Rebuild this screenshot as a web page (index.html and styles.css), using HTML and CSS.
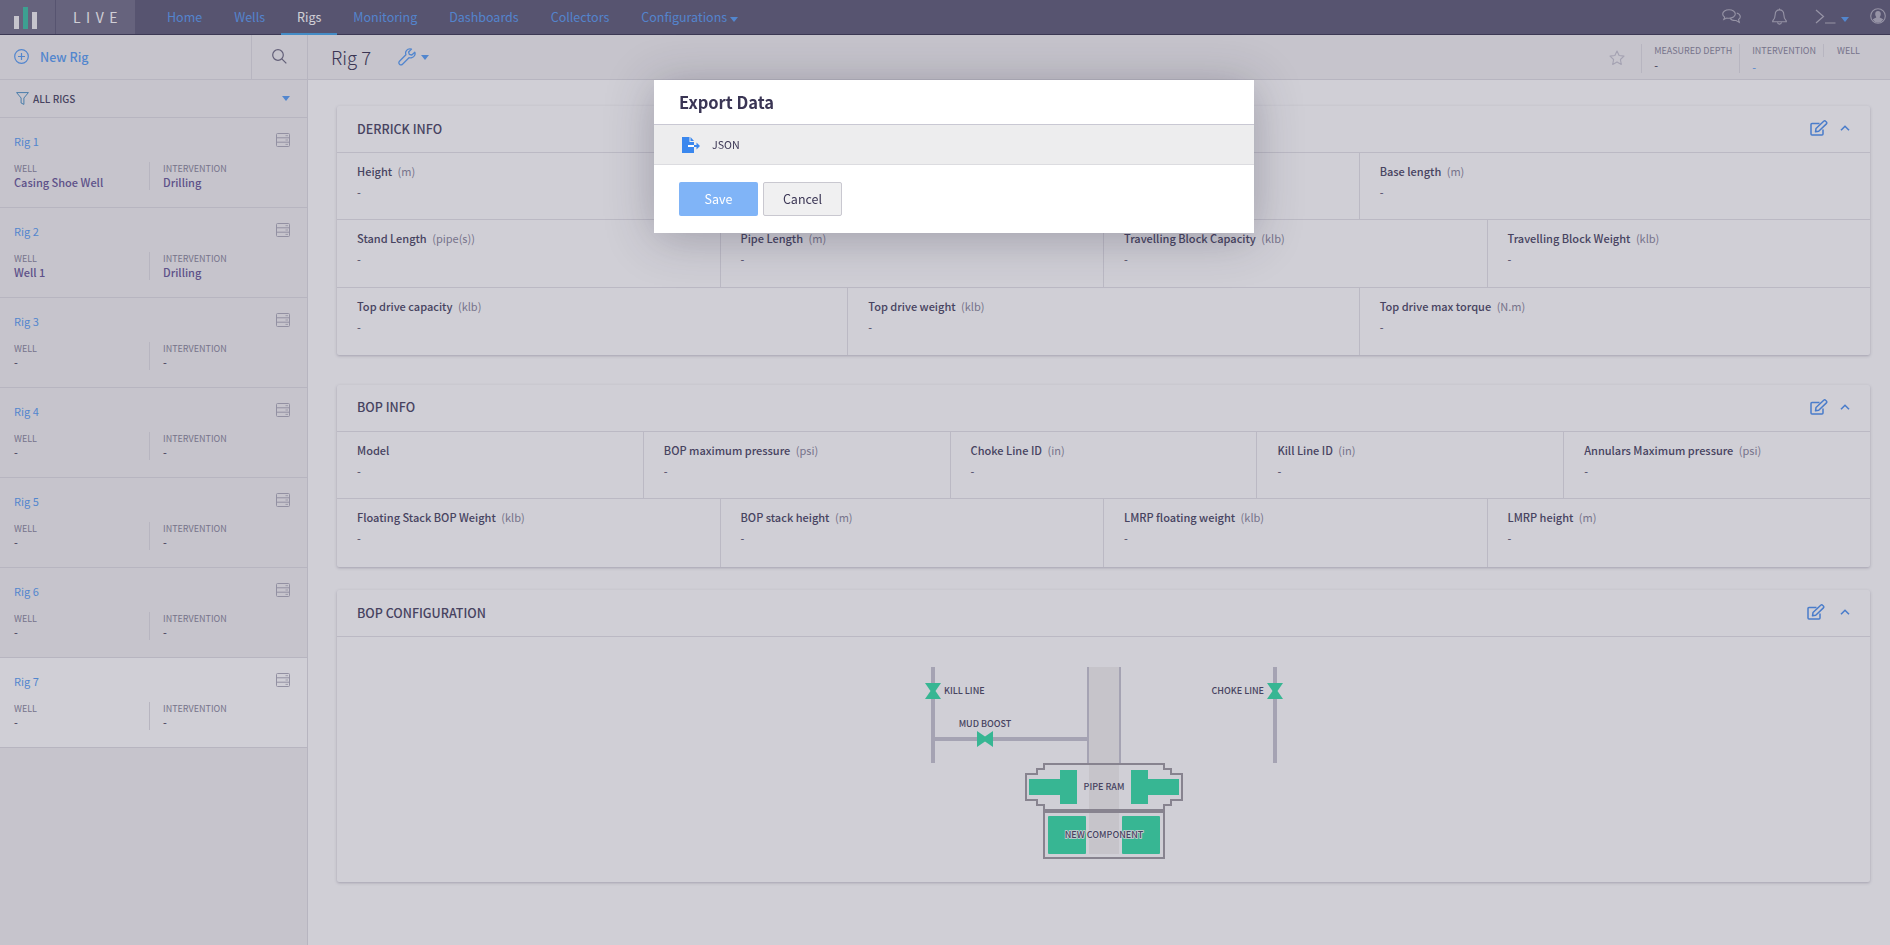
FILE: index.html
```html
<!DOCTYPE html>
<html lang="en">
<head>
    <meta charset="UTF-8">
    <title>Rig 7 - Live</title>
    <link rel="stylesheet" href="styles.css">
</head>
<body>

<svg class="icon-defs" width="0" height="0">
    <symbol id="i-server" viewBox="0 0 14 14">
        <rect x="0.5" y="0.5" width="13" height="13" rx="1" fill="none" stroke="currentColor"/>
        <path d="M1 4.8H13M1 9.2H13" stroke="currentColor" fill="none"/>
        <path d="M9.5 2.7H12M9.5 7H12M9.5 11.4H12" stroke="currentColor" stroke-width="0.8" fill="none"/>
    </symbol>
    <symbol id="i-edit" viewBox="0 0 18 16">
        <path d="M13 9.5V14a1 1 0 0 1-1 1H2a1 1 0 0 1-1-1V4.500a1 1 0 0 1 1-1h7.500" fill="none" stroke="currentColor" stroke-width="1.500"/>
        <path d="M6 8.500L13.700 1.200a1.300 1.300 0 0 1 1.900 0l.8.8a1.300 1.300 0 0 1 0 1.900L8.700 11.200 5.500 11.800z" fill="none" stroke="currentColor" stroke-width="1.500" stroke-linejoin="round"/>
    </symbol>
    <symbol id="i-up" viewBox="0 0 10 6">
        <path d="M1 5.200L5 1.300 9 5.200" fill="none" stroke="currentColor" stroke-width="1.600"/>
    </symbol>
</svg>

<header class="topbar">
    <div class="logo-mark">
        <span class="bar bar-1"></span>
        <span class="bar bar-2"></span>
        <span class="bar bar-3"></span>
    </div>
    <div class="logo-name">LIVE</div>
    <nav class="nav">
        <a class="nav-item">Home</a>
        <a class="nav-item">Wells</a>
        <a class="nav-item active">Rigs</a>
        <a class="nav-item">Monitoring</a>
        <a class="nav-item">Dashboards</a>
        <a class="nav-item">Collectors</a>
        <a class="nav-item">Configurations <span class="caret"></span></a>
    </nav>
    <div class="top-icons">
        <svg class="ti-chat" width="19" height="15" viewBox="0 0 19 15" fill="none" stroke="currentColor" stroke-width="1.100">
            <path d="M7 .8C3.500.8.700 2.700.700 5c0 1.200.8 2.300 2 3.100L1.800 10.500 4.800 9c.7.2 1.400.2 2.200.2 3.500 0 6.300-1.900 6.300-4.200S10.500.8 7 .8z"/>
            <path d="M14.800 4c2 .7 3.500 2 3.500 3.700 0 1.100-.7 2.100-1.800 2.800l.8 2.900-3.200-1.900c-2.500.2-5-.6-6-2.300"/>
        </svg>
        <svg class="ti-bell" width="15" height="17" viewBox="0 0 15 17" fill="none" stroke="currentColor" stroke-width="1.100">
            <path d="M7.500 1.900c-2.600 0-4.300 2-4.300 4.500 0 3.500-.9 5-2.500 6.600v.7h13.600V13c-1.600-1.600-2.500-3.100-2.500-6.600 0-2.500-1.700-4.500-4.300-4.500z"/>
            <path d="M7.500 .5v1.400M5.600 14.200a1.900 1.900 0 0 0 3.800 0"/>
        </svg>
        <svg class="ti-term" width="21" height="15" viewBox="0 0 21 15" fill="none" stroke="currentColor" stroke-width="1.200">
            <path d="M1 1l7.500 6.500L1 14M10 14h10.500"/>
        </svg>
        <span class="caret ti-caret"></span>
        <svg class="ti-user" width="16" height="16" viewBox="0 0 16 16">
            <circle cx="8" cy="8" r="7.300" fill="none" stroke="currentColor" stroke-width="1.100"/>
            <path d="M8 3c1.800 0 2.800 1.300 2.800 3S9.900 8.600 9.700 9.400c1.600.7 3 1.100 3.600 2.100A6.600 6.600 0 0 1 8 14.700a6.600 6.600 0 0 1-5.300-3.200c.6-1 2-1.400 3.600-2.100C6.100 8.600 5.200 7.700 5.200 6S6.200 3 8 3z" fill="currentColor"/>
        </svg>
    </div>
</header>

<div class="layout">
    <aside class="sidebar">
        <div class="side-head">
            <div class="new-rig">
                <svg width="15" height="15" viewBox="0 0 15 15" fill="none" stroke="currentColor" stroke-width="1.200">
                    <circle cx="7.500" cy="7.500" r="6.800"/>
                    <path d="M7.500 4v7M4 7.500h7"/>
                </svg>
                <span>New Rig</span>
            </div>
            <div class="side-search">
                <svg width="15" height="15" viewBox="0 0 15 15" fill="none" stroke="currentColor" stroke-width="1.200">
                    <circle cx="6" cy="6" r="5.300"/>
                    <path d="M9.800 9.800L14.300 14.300"/>
                </svg>
            </div>
        </div>
        <div class="side-filter">
            <svg class="filter-icon" width="13" height="13" viewBox="0 0 13 13" fill="none" stroke="currentColor" stroke-width="1">
                <path d="M.6 .6h11.800L7.900 6v6.400L5.100 11V6z" stroke-linejoin="round"/>
            </svg>
            <span class="filter-name">ALL RIGS</span>
            <span class="caret"></span>
        </div>

        <div class="rig">
            <div class="rig-top"><a class="rig-name">Rig 1</a><svg class="rig-icon" width="14" height="14"><use href="#i-server"/></svg></div>
            <div class="rig-info">
                <div class="rig-col rig-well"><div class="rig-label">WELL</div><div class="rig-value">Casing Shoe Well</div></div>
                <div class="rig-col"><div class="rig-label">INTERVENTION</div><div class="rig-value">Drilling</div></div>
            </div>
        </div>
        <div class="rig">
            <div class="rig-top"><a class="rig-name">Rig 2</a><svg class="rig-icon" width="14" height="14"><use href="#i-server"/></svg></div>
            <div class="rig-info">
                <div class="rig-col rig-well"><div class="rig-label">WELL</div><div class="rig-value">Well 1</div></div>
                <div class="rig-col"><div class="rig-label">INTERVENTION</div><div class="rig-value">Drilling</div></div>
            </div>
        </div>
        <div class="rig">
            <div class="rig-top"><a class="rig-name">Rig 3</a><svg class="rig-icon" width="14" height="14"><use href="#i-server"/></svg></div>
            <div class="rig-info">
                <div class="rig-col rig-well"><div class="rig-label">WELL</div><div class="rig-value empty">-</div></div>
                <div class="rig-col"><div class="rig-label">INTERVENTION</div><div class="rig-value empty">-</div></div>
            </div>
        </div>
        <div class="rig">
            <div class="rig-top"><a class="rig-name">Rig 4</a><svg class="rig-icon" width="14" height="14"><use href="#i-server"/></svg></div>
            <div class="rig-info">
                <div class="rig-col rig-well"><div class="rig-label">WELL</div><div class="rig-value empty">-</div></div>
                <div class="rig-col"><div class="rig-label">INTERVENTION</div><div class="rig-value empty">-</div></div>
            </div>
        </div>
        <div class="rig">
            <div class="rig-top"><a class="rig-name">Rig 5</a><svg class="rig-icon" width="14" height="14"><use href="#i-server"/></svg></div>
            <div class="rig-info">
                <div class="rig-col rig-well"><div class="rig-label">WELL</div><div class="rig-value empty">-</div></div>
                <div class="rig-col"><div class="rig-label">INTERVENTION</div><div class="rig-value empty">-</div></div>
            </div>
        </div>
        <div class="rig">
            <div class="rig-top"><a class="rig-name">Rig 6</a><svg class="rig-icon" width="14" height="14"><use href="#i-server"/></svg></div>
            <div class="rig-info">
                <div class="rig-col rig-well"><div class="rig-label">WELL</div><div class="rig-value empty">-</div></div>
                <div class="rig-col"><div class="rig-label">INTERVENTION</div><div class="rig-value empty">-</div></div>
            </div>
        </div>
        <div class="rig selected">
            <div class="rig-top"><a class="rig-name">Rig 7</a><svg class="rig-icon" width="14" height="14"><use href="#i-server"/></svg></div>
            <div class="rig-info">
                <div class="rig-col rig-well"><div class="rig-label">WELL</div><div class="rig-value empty">-</div></div>
                <div class="rig-col"><div class="rig-label">INTERVENTION</div><div class="rig-value empty">-</div></div>
            </div>
        </div>
    </aside>

    <main class="main">
        <div class="main-head">
            <h1 class="rig-title">Rig 7</h1>
            <svg class="wrench" width="18" height="18" viewBox="0 0 18 18" fill="none" stroke="currentColor" stroke-width="1.300">
                <path d="M16.800 4.200l-3 2.800-2.500-.6-.7-2.400L13.500 1.100C11 .2 8.500 1.500 7.800 3.800c-.3 1-.2 2 .1 2.900L1.500 13.200c-.9.900-.9 2.200 0 3s2.100.9 3 0l6.500-6.500c.9.300 1.900.3 2.800 0 2.500-.8 3.900-3.200 3-5.500z" stroke-linejoin="round"/>
            </svg>
            <span class="caret"></span>
            <div class="head-right">
                <svg class="star" width="16" height="15" viewBox="0 0 16 15" fill="none" stroke="currentColor" stroke-width="1.100">
                    <path d="M8 1l2.100 4.500 4.900.6-3.600 3.400.9 4.900L8 11.900l-4.300 2.500.9-4.900L1 6.100l4.900-.6z" stroke-linejoin="round"/>
                </svg>
                <div class="stat"><div class="stat-label">MEASURED DEPTH</div><div class="stat-value">-</div></div>
                <div class="stat"><div class="stat-label">INTERVENTION</div><div class="stat-value blue">-</div></div>
                <div class="stat short"><div class="stat-label">WELL</div></div>
            </div>
        </div>

        <div class="content">
            <section class="card">
                <div class="card-head">
                    <h2 class="card-title">DERRICK INFO</h2>
                    <svg class="edit" width="18" height="16"><use href="#i-edit"/></svg>
                    <svg class="chev" width="10" height="6"><use href="#i-up"/></svg>
                </div>
                <div class="row">
                    <div class="cell"><div class="label">Height <i>(m)</i></div><div class="value">-</div></div>
                    <div class="cell"><div class="label">Base width <i>(m)</i></div><div class="value">-</div></div>
                    <div class="cell"><div class="label">Base length <i>(m)</i></div><div class="value">-</div></div>
                </div>
                <div class="row">
                    <div class="cell"><div class="label">Stand Length <i>(pipe(s))</i></div><div class="value">-</div></div>
                    <div class="cell"><div class="label">Pipe Length <i>(m)</i></div><div class="value">-</div></div>
                    <div class="cell"><div class="label">Travelling Block Capacity <i>(klb)</i></div><div class="value">-</div></div>
                    <div class="cell"><div class="label">Travelling Block Weight <i>(klb)</i></div><div class="value">-</div></div>
                </div>
                <div class="row">
                    <div class="cell"><div class="label">Top drive capacity <i>(klb)</i></div><div class="value">-</div></div>
                    <div class="cell"><div class="label">Top drive weight <i>(klb)</i></div><div class="value">-</div></div>
                    <div class="cell"><div class="label">Top drive max torque <i>(N.m)</i></div><div class="value">-</div></div>
                </div>
            </section>

            <section class="card card-bop">
                <div class="card-head">
                    <h2 class="card-title">BOP INFO</h2>
                    <svg class="edit" width="18" height="16"><use href="#i-edit"/></svg>
                    <svg class="chev" width="10" height="6"><use href="#i-up"/></svg>
                </div>
                <div class="row">
                    <div class="cell"><div class="label">Model</div><div class="value">-</div></div>
                    <div class="cell"><div class="label">BOP maximum pressure <i>(psi)</i></div><div class="value">-</div></div>
                    <div class="cell"><div class="label">Choke Line ID <i>(in)</i></div><div class="value">-</div></div>
                    <div class="cell"><div class="label">Kill Line ID <i>(in)</i></div><div class="value">-</div></div>
                    <div class="cell"><div class="label">Annulars Maximum pressure <i>(psi)</i></div><div class="value">-</div></div>
                </div>
                <div class="row">
                    <div class="cell"><div class="label">Floating Stack BOP Weight <i>(klb)</i></div><div class="value">-</div></div>
                    <div class="cell"><div class="label">BOP stack height <i>(m)</i></div><div class="value">-</div></div>
                    <div class="cell"><div class="label">LMRP floating weight <i>(klb)</i></div><div class="value">-</div></div>
                    <div class="cell"><div class="label">LMRP height <i>(m)</i></div><div class="value">-</div></div>
                </div>
            </section>

            <section class="card card-config">
                <div class="card-head">
                    <h2 class="card-title">BOP CONFIGURATION</h2>
                    <svg class="edit edit-wide" width="18" height="16"><use href="#i-edit"/></svg>
                    <svg class="chev" width="10" height="6"><use href="#i-up"/></svg>
                </div>
                <div class="config-body">
                    <!-- 0,0 of the drawing = page 904,667 -->
                    <svg class="bop" width="400" height="195" viewBox="0 0 400 195">
                        <rect class="line" x="27" y="0" width="4" height="96"/>
                        <rect class="line" x="369" y="0" width="4" height="96"/>
                        <rect class="line" x="31" y="70" width="152" height="4"/>
                        <rect class="bore" x="185" y="0" width="30" height="187"/>
                        <rect class="line" x="183" y="0" width="2" height="96"/>
                        <rect class="line" x="215" y="0" width="2" height="96"/>

                        <path class="valve" d="M21 16H37L31.500 24 37 32H21L26.500 24z"/>
                        <path class="valve" d="M363 16H379L373.500 24 379 32H363L368.500 24z"/>
                        <path class="valve" d="M73 64V80L81 74.500 89 80V64L81 69.500z"/>

                        <path class="shell" d="M140 97H260V102H267V107H278V133H267V138H260V143H140V138H133V133H122V107H133V102H140z"/>
                        <path class="ram" d="M125 112H156V103H173V137H156V128H125z"/>
                        <path class="ram" d="M275 112H244V103H227V137H244V128H275z"/>

                        <rect class="shell" x="140" y="143" width="120" height="48"/>
                        <rect class="shell-top" x="140" y="142" width="120" height="4"/>
                        <rect class="ram" x="144" y="149" width="38" height="38" rx="1"/>
                        <rect class="ram" x="218" y="149" width="38" height="38" rx="1"/>

                        <text class="bop-text" x="40" y="27">KILL LINE</text>
                        <text class="bop-text" x="360" y="27" text-anchor="end">CHOKE LINE</text>
                        <text class="bop-text" x="81" y="60" text-anchor="middle">MUD BOOST</text>
                        <text class="bop-text" x="200" y="123" text-anchor="middle">PIPE RAM</text>
                        <text class="bop-text halo" x="200" y="171" text-anchor="middle">NEW COMPONENT</text>
                    </svg>
                </div>
            </section>
        </div>
    </main>
</div>

<div class="overlay"></div>

<div class="modal">
    <h3 class="modal-title">Export Data</h3>
    <div class="modal-row">
        <svg width="18" height="16" viewBox="0 0 18 16">
            <path d="M0 0H7.500V5H12V16H0z" fill="#3a87ee"/>
            <path d="M8.500 0L12 4H8.500z" fill="#3a87ee"/>
            <path d="M6 8H12V10H6z" fill="#fff"/>
            <path d="M12 8H15V10H12z" fill="#3a87ee"/>
            <path d="M14.500 5.500L18 9 14.500 12.500z" fill="#3a87ee"/>
        </svg>
        <span>JSON</span>
    </div>
    <div class="modal-foot">
        <button class="btn btn-save">Save</button>
        <button class="btn btn-cancel">Cancel</button>
    </div>
</div>

</body>
</html>
```

FILE: styles.css
```css
* {
    box-sizing: border-box;
}

html, body {
    margin: 0;
    height: 100%;
    overflow: hidden;
}

body {
    background: #fff;
    color: #3a3554;
    font-family: "Noto Sans CJK SC", "Noto Sans", sans-serif;
    font-size: 12px;
}

.icon-defs {
    position: absolute;
}

.caret {
    display: inline-block;
    width: 0;
    height: 0;
    border-left: 4px solid transparent;
    border-right: 4px solid transparent;
    border-top: 5px solid #5aa0f5;
}

/* top bar */
.topbar {
    display: flex;
    height: 35px;
    background: #615e79;
    border-bottom: 1px solid #3d3a55;
}

.logo-mark {
    display: flex;
    align-items: flex-end;
    gap: 4px;
    width: 56px;
    padding: 0 0 5px 14px;
    background: #74718a;
    border-right: 1px solid #615e79;
}

.bar {
    width: 5px;
    background: #f2f1f4;
}

.bar-1 { height: 13px; }
.bar-2 { height: 22px; background: #3fc1a5; }
.bar-3 { height: 17px; }

.logo-name {
    width: 79px;
    padding-left: 17px;
    background: #74718a;
    color: #fff;
    font-size: 14px;
    font-weight: 400;
    line-height: 34px;
    letter-spacing: 5.500px;
}

.nav {
    display: flex;
    padding-left: 16px;
}

.nav-item {
    padding: 0 16px;
    color: #5b9df2;
    font-size: 12.500px;
    line-height: 34px;
}

.nav-item.active {
    color: #fff;
    border-bottom: 2px solid #47a8ea;
    height: 35px;
}

.top-icons {
    position: relative;
    flex: 1;
    color: #b3b1c0;
}

.top-icons svg, .ti-caret {
    position: absolute;
}

.ti-chat { right: 149px; top: 9px; }
.ti-bell { right: 103px; top: 8px; }
.ti-term { right: 54px; top: 9px; }
.ti-caret { right: 41px; top: 17px; }
.ti-user { right: 4px; top: 8px; }

/* columns */
.layout {
    display: flex;
    height: 910px;
}

.sidebar {
    width: 308px;
    background: #f2f1f2;
    border-right: 1px solid #dedde2;
}

.side-head {
    display: flex;
    height: 45px;
    border-bottom: 1px solid #dedde2;
}

.new-rig {
    display: flex;
    align-items: center;
    gap: 11px;
    width: 252px;
    padding: 0 0 1px 14px;
    border-right: 1px solid #dedde2;
    color: #5a9ff5;
    font-size: 12.500px;
    font-weight: 500;
}

.side-search {
    flex: 1;
    padding: 14px 0 0 20px;
    color: #6f6c84;
}

.side-filter {
    display: flex;
    align-items: center;
    height: 38px;
    padding: 0 17px 0 16px;
    border-bottom: 1px solid #dedde2;
    color: #4b4765;
}

.filter-icon {
    color: #4f93c5;
}

.filter-name {
    flex: 1;
    margin-left: 4px;
    font-size: 10px;
    font-weight: 500;
}

.rig {
    height: 90px;
    padding: 14px 14px 0;
    border-bottom: 1px solid #dedde2;
}

.rig.selected {
    background: #fff;
}

.rig-top {
    display: flex;
    justify-content: space-between;
    height: 27px;
}

.rig-name {
    color: #5a9ff5;
    font-size: 11px;
    line-height: 18px;
}

.rig-icon {
    margin: 1px 3px 0 0;
    color: #aeacbb;
}

.rig-info {
    display: flex;
    margin-top: 3px;
}

.rig-col {
    height: 28px;
}

.rig-well {
    width: 136px;
    border-right: 1px solid #dedde2;
    margin-right: 13px;
}

.rig-label {
    color: #8a879c;
    font-size: 9px;
    line-height: 13px;
}

.rig-value {
    color: #6a5a9a;
    font-size: 11px;
    font-weight: 500;
    line-height: 15px;
}

.rig-value.empty {
    color: #3a3554;
    font-weight: 400;
}

/* rig page */
.main {
    flex: 1;
    min-width: 0;
}

.main-head {
    display: flex;
    align-items: center;
    height: 45px;
    padding-left: 23px;
    background: #f2f1f2;
    border-bottom: 1px solid #dedde2;
}

.rig-title {
    margin: 0 27px 0 0;
    font-size: 18.500px;
    font-weight: 300;
    line-height: 44px;
}

.wrench {
    margin-right: 5px;
    color: #5a9ff5;
}

.head-right {
    display: flex;
    align-items: flex-start;
    margin-left: auto;
    padding-top: 8px;
    height: 43px;
}

.star {
    margin: 6px 16px 0 0;
    color: #c6c4d0;
}

.stat {
    height: 29px;
    padding: 0 7px 0 12px;
    border-left: 1px solid #dedde2;
}

.stat.short {
    height: 13px;
    padding: 0 30px 0 13px;
}

.stat-label {
    color: #8a879c;
    font-size: 9px;
    line-height: 13px;
}

.stat-value {
    margin-top: 1px;
    color: #3a3554;
    font-size: 11px;
    line-height: 14px;
}

.stat-value.blue {
    margin-top: 3px;
    color: #5a9ff5;
}

.content {
    padding: 26px 20px 0 29px;
}

.card {
    background: #fff;
    border-radius: 2px;
    box-shadow: 0 1px 3px rgba(58, 53, 84, 0.3);
    margin-bottom: 30px;
}

.card-bop {
    margin-bottom: 23.500px;
}

.card-head {
    display: flex;
    align-items: center;
    height: 47px;
    padding: 0 20px 2px;
    border-bottom: 1px solid #e4e3e8;
}

.card-title {
    flex: 1;
    margin: 0;
    color: #4b4765;
    font-size: 12.500px;
    font-weight: 500;
}

.edit {
    color: #4f93f0;
}

.edit-wide {
    margin-right: 3px;
}

.chev {
    margin-left: 12px;
    color: #4f93f0;
}

.row {
    display: flex;
    height: 67.330px;
    border-bottom: 1px solid #e4e3e8;
}

.row:last-child {
    border-bottom: none;
}

.cell {
    flex: 1 1 0;
    min-width: 0;
    padding: 10px 20px 0;
    border-right: 1px solid #e4e3e8;
}

.cell:last-child {
    border-right: none;
}

.label {
    color: #4b4765;
    font-size: 11px;
    font-weight: 500;
    line-height: 16px;
}

.label i {
    margin-left: 3px;
    color: #8a879c;
    font-style: normal;
    font-weight: 400;
}

.value {
    margin-top: 5px;
    color: #4b4765;
    font-size: 11px;
    line-height: 16px;
}

.config-body {
    display: flex;
    justify-content: center;
    height: 245px;
    padding-top: 30px;
}

.bop {
    overflow: visible;
}

.line { fill: #c7c6d2; }
.bore { fill: #f2f1f0; }
.valve, .ram { fill: #37dea7; }

.shell {
    fill: none;
    stroke: #9f9ca2;
    stroke-width: 2;
}

.shell-top {
    fill: #9f9ca2;
}

.bop-text {
    fill: #4b4765;
    font-size: 9px;
    font-weight: 500;
}

.halo {
    paint-order: stroke;
    stroke: #fff;
    stroke-width: 1.500px;
}

/* dialog */
.overlay {
    position: fixed;
    inset: 0;
    background: rgba(58, 53, 84, 0.24);
}

.modal {
    position: fixed;
    left: 654px;
    top: 80px;
    width: 600px;
    height: 153px;
    background: #fff;
    box-shadow: 0 5px 45px rgba(40, 36, 60, 0.3);
}

.modal-title {
    height: 44px;
    margin: 0;
    padding-left: 25px;
    color: #3a3554;
    font-size: 16.500px;
    font-weight: 700;
    line-height: 45px;
}

.modal-row {
    display: flex;
    align-items: center;
    gap: 12px;
    height: 41px;
    padding-left: 28px;
    background: #ededee;
    border-top: 1px solid #c9c8d3;
    border-bottom: 1px solid #dcdce0;
    font-size: 10.700px;
}

.modal-foot {
    display: flex;
    gap: 5px;
    padding: 17px 25px 0;
}

.btn {
    width: 79px;
    height: 34px;
    padding: 0 0 2px;
    border-radius: 2px;
    font-family: inherit;
    font-size: 12.500px;
}

.btn-save {
    border: none;
    background: #80b4f7;
    color: #fff;
}

.btn-cancel {
    border: 1px solid #c9c8d0;
    background: #f0f0f1;
    color: #3a3554;
}
```
